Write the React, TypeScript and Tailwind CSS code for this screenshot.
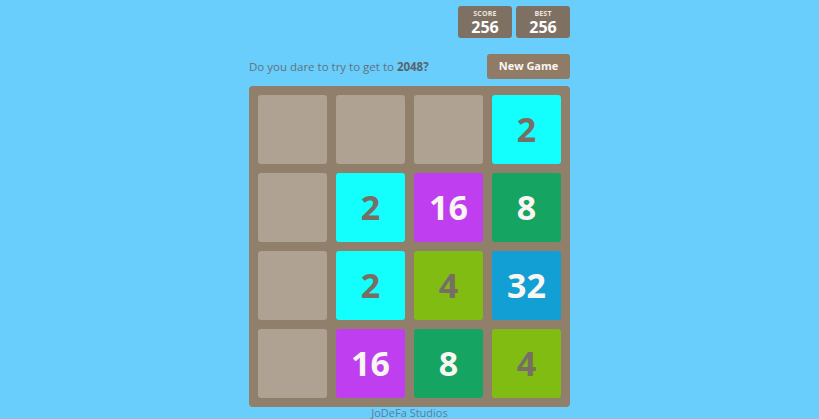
const board: number[][] = [
  [0, 0, 0, 2],
  [0, 2, 16, 8],
  [0, 2, 4, 32],
  [0, 16, 8, 4],
]

// tile colours per value
const tileClass: Record<number, string> = {
  0: 'bg-[#b0a292]',
  2: 'bg-[#12fffd] text-[#776e65]',
  4: 'bg-[#80bc12] text-[#776e65]',
  8: 'bg-[#16a462] text-[#f9f6f2]',
  16: 'bg-[#bf3ff0] text-[#f9f6f2]',
  32: 'bg-[#129fd4] text-[#f9f6f2]',
}

function ScoreBox({ label, value }: { label: string; value: number }) {
  return (
    <div className="flex h-[32px] w-[54px] flex-col items-center justify-center rounded-[3px] bg-[#7e7164] text-white">
      <span className="text-[7px] leading-[8px] font-bold tracking-wide text-[#eee4da]">{label}</span>
      <span className="mt-[2px] text-[16px] leading-[15px] font-bold">{value}</span>
    </div>
  )
}

export default function App() {
  return (
    <div className="h-[419px] w-full overflow-hidden bg-[#6acefc] font-['Open_Sans',sans-serif]">
      <div className="mx-auto w-[321px]">
        <div className="flex justify-end gap-[4px] pt-[6px]">
          <ScoreBox label="SCORE" value={256} />
          <ScoreBox label="BEST" value={256} />
        </div>

        <div className="mt-[16px] flex items-center justify-between">
          <p className="text-[11.5px] text-[#5f727c]">
            Do you dare to try to get to <strong className="font-bold text-[#56656c]">2048?</strong>
          </p>
          <button className="h-[25px] w-[83px] rounded-[3px] bg-[#8f7b66] text-[11px] font-bold text-[#f9f6f2]">
            New Game
          </button>
        </div>

        <div className="mt-[7px] grid grid-cols-4 gap-[9px] rounded-[4px] bg-[#8f7f6b] p-[9px]">
          {board.flat().map((v, i) => (
            <div
              key={i}
              className={`flex h-[69px] items-center justify-center rounded-[3px] text-[34px] font-bold ${tileClass[v]}`}
            >
              {v > 0 ? v : ''}
            </div>
          ))}
        </div>

        <p className="-mt-[1px] text-center text-[11px] leading-[13px] text-[#5b7d9a]">JoDeFa Studios</p>
      </div>
    </div>
  )
}
